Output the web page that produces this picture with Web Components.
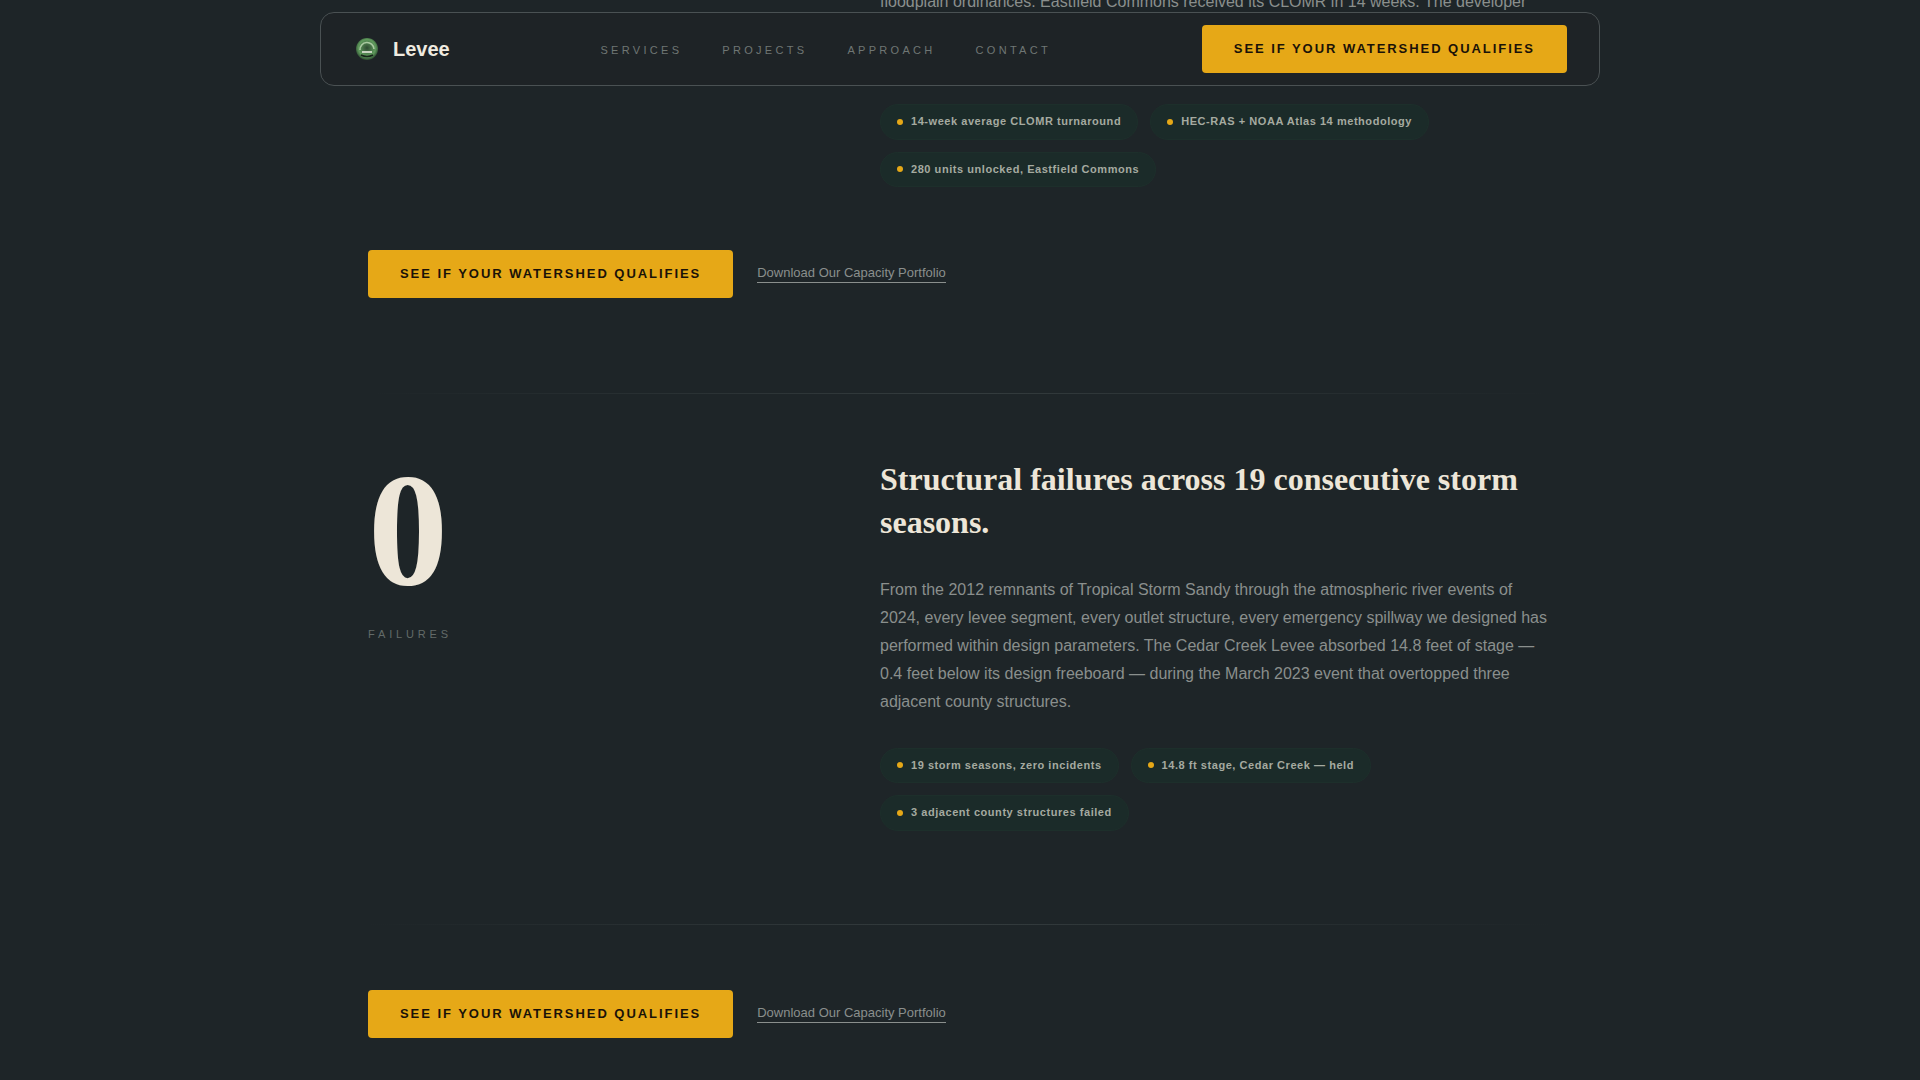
<!DOCTYPE html>
<html lang="en">
<head>
<meta charset="utf-8">
<title>Levee</title>
<style>
  html, body { margin: 0; height: 100%; overflow: hidden; background: #1e2528; }
  body { font-family: "Liberation Sans", Arial, sans-serif; color: #8a8f8d; }
  main { display: block; max-width: 1184px; margin: -12px auto 0; }
</style>
</head>
<body>
<levee-nav></levee-nav>
<main>
  <levee-point clipped>
    <p>floodplain ordinances. Eastfield Commons received its CLOMR in 14 weeks. The developer</p>
    <levee-pill slot="pills">14-week average CLOMR turnaround</levee-pill>
    <levee-pill slot="pills">HEC-RAS + NOAA Atlas 14 methodology</levee-pill>
    <levee-pill slot="pills">280 units unlocked, Eastfield Commons</levee-pill>
  </levee-point>
  <levee-cta style="margin-top: 63px"></levee-cta>
  <levee-rule style="margin-top: 95px"></levee-rule>
  <levee-point number="0" label="Failures" title="Structural failures across 19 consecutive storm seasons." style="margin-top: 64px">
    <p>From the 2012 remnants of Tropical Storm Sandy through the atmospheric river events of 2024, every levee segment, every outlet structure, every emergency spillway we designed has performed within design parameters. The Cedar Creek Levee absorbed 14.8 feet of stage — 0.4 feet below its design freeboard — during the March 2023 event that overtopped three adjacent county structures.</p>
    <levee-pill slot="pills">19 storm seasons, zero incidents</levee-pill>
    <levee-pill slot="pills">14.8 ft stage, Cedar Creek — held</levee-pill>
    <levee-pill slot="pills">3 adjacent county structures failed</levee-pill>
  </levee-point>
  <levee-rule style="margin-top: 93px"></levee-rule>
  <levee-cta style="margin-top: 65px"></levee-cta>
</main>

<script>
// Gold call to action, used in the nav and in the cta rows
class LeveeButton extends HTMLElement {
  constructor() {
    super();
    this.attachShadow({ mode: "open" }).innerHTML = `
      <style>
        :host { display: inline-block; }
        a {
          display: block;
          padding: 16px 32px;
          background: #e6a817;
          border-radius: 4px;
          color: #1a1208;
          font: 700 13px/16px "Liberation Sans", Arial, sans-serif;
          letter-spacing: 0.15em;
          text-transform: uppercase;
          text-decoration: none;
          white-space: nowrap;
        }
      </style>
      <a href="#"><slot></slot></a>`;
  }
}
customElements.define("levee-button", LeveeButton);

class LeveeNav extends HTMLElement {
  constructor() {
    super();
    this.attachShadow({ mode: "open" }).innerHTML = `
      <style>
        :host {
          position: fixed;
          top: 12px;
          left: 320px;
          width: 1280px;
          box-sizing: border-box;
          display: flex;
          justify-content: space-between;
          align-items: center;
          padding: 12px 32px;
          background: #1e2326;
          border: 1px solid #4a5153;
          border-radius: 14px;
          z-index: 10;
        }
        .logo {
          display: flex;
          align-items: center;
          gap: 12px;
          color: #f0ebe0;
          font: 700 20px/24px "Liberation Sans", Arial, sans-serif;
        }
        svg { display: block; }
        ul { display: flex; gap: 40px; list-style: none; margin: 0; padding: 0; }
        li a {
          color: #6f7674;
          font: 400 11px/17px "Liberation Sans", Arial, sans-serif;
          letter-spacing: 0.3em;
          text-transform: uppercase;
          text-decoration: none;
        }
      </style>
      <div class="logo">
        <svg width="28" height="28" viewBox="0 0 28 28" aria-hidden="true">
          <defs>
            <radialGradient id="seal" cx="50%" cy="45%" r="55%">
              <stop offset="0" stop-color="#2f4a32"/>
              <stop offset="0.7" stop-color="#5f9a5c"/>
              <stop offset="1" stop-color="#2c4a30"/>
            </radialGradient>
          </defs>
          <circle cx="14" cy="14" r="11" fill="url(#seal)"/>
          <path d="M7 15a7 7 0 0 1 14 -1" fill="none" stroke="#a9c9a0" stroke-width="1.6"/>
          <path d="M9 17h10" stroke="#c7d2c0" stroke-width="2"/>
          <path d="M8 20q6 3 12 0" fill="none" stroke="#16241a" stroke-width="1.6"/>
        </svg>
        Levee
      </div>
      <ul>
        <li><a href="#">Services</a></li>
        <li><a href="#">Projects</a></li>
        <li><a href="#">Approach</a></li>
        <li><a href="#">Contact</a></li>
      </ul>
      <levee-button>See if your watershed qualifies</levee-button>`;
  }
}
customElements.define("levee-nav", LeveeNav);

class LeveePill extends HTMLElement {
  constructor() {
    super();
    this.attachShadow({ mode: "open" }).innerHTML = `
      <style>
        :host {
          display: inline-flex;
          align-items: center;
          gap: 8px;
          padding: 8px 16px;
          background: #1b2b29;
          border: 1px solid #1d2f2b;
          border-radius: 999px;
          color: #a5aaa0;
          font: 700 11px/17.6px "Liberation Sans", Arial, sans-serif;
          letter-spacing: 0.05em;
        }
        i { width: 6px; height: 6px; border-radius: 50%; background: #e6a817; }
      </style>
      <i></i><slot></slot>`;
  }
}
customElements.define("levee-pill", LeveePill);

// One row of the proof list: big number on the left, story on the right
class LeveePoint extends HTMLElement {
  constructor() {
    super();
    const number = this.getAttribute("number");
    const stat = number === null ? "" : `
      <div class="number">${number}</div>
      <div class="label">${this.getAttribute("label")}</div>`;
    const title = this.getAttribute("title");
    this.removeAttribute("title");
    this.attachShadow({ mode: "open" }).innerHTML = `
      <style>
        :host {
          display: grid;
          grid-template-columns: 1fr 1.5fr;
          gap: 64px;
        }
        .number {
          margin-top: -8px;
          color: #ede6d8;
          font: 700 160px/160px "Liberation Serif", "Times New Roman", serif;
        }
        .label {
          margin-top: 16px;
          color: #636b69;
          font: 400 11px/17px "Liberation Sans", Arial, sans-serif;
          letter-spacing: 0.35em;
          text-transform: uppercase;
        }
        h2 {
          margin: 0 0 31px;
          color: #ede6d8;
          font: 700 32px/43.2px "Liberation Serif", "Times New Roman", serif;
        }
        ::slotted(p) {
          margin: 0;
          color: #8a8f8d;
          font: 400 16px/28px "Liberation Sans", Arial, sans-serif;
        }
        :host([clipped]) ::slotted(p) { padding-bottom: 56px; }
        .pills { display: flex; flex-wrap: wrap; gap: 12px; margin-top: 32px; }
      </style>
      <div>${stat}</div>
      <div>
        ${title ? `<h2>${title}</h2>` : ""}
        <slot></slot>
        <div class="pills"><slot name="pills"></slot></div>
      </div>`;
  }
}
customElements.define("levee-point", LeveePoint);

class LeveeCta extends HTMLElement {
  constructor() {
    super();
    this.attachShadow({ mode: "open" }).innerHTML = `
      <style>
        :host { display: flex; align-items: center; gap: 24px; }
        a {
          color: #8a8f8d;
          font: 400 13px/16px "Liberation Sans", Arial, sans-serif;
          text-decoration: none;
          border-bottom: 1px solid #8a8f8d;
          padding-bottom: 1px;
        }
      </style>
      <levee-button>See if your watershed qualifies</levee-button>
      <a href="#">Download Our Capacity Portfolio</a>`;
  }
}
customElements.define("levee-cta", LeveeCta);

class LeveeRule extends HTMLElement {
  constructor() {
    super();
    this.attachShadow({ mode: "open" }).innerHTML = `
      <style>
        :host {
          display: block;
          height: 1px;
          background: linear-gradient(90deg, transparent, #343c3e 50%, transparent);
        }
      </style>`;
  }
}
customElements.define("levee-rule", LeveeRule);
</script>
</body>
</html>
